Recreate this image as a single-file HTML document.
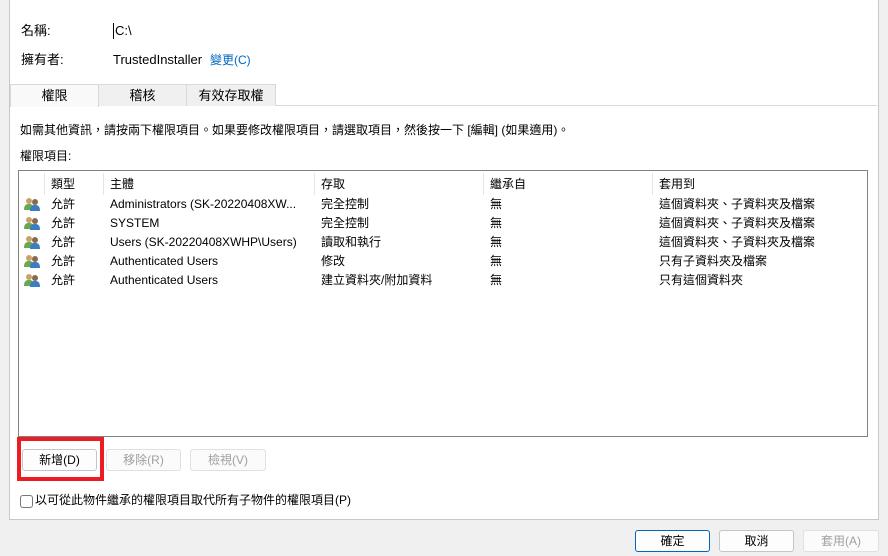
<!DOCTYPE html><html><head><meta charset="utf-8"><style>
body{margin:0;width:888px;height:556px;background:#f0f0f0;font-family:"Liberation Sans","Noto Sans CJK TC",sans-serif;font-size:12px;color:#000;position:relative;overflow:hidden}
.a{position:absolute;white-space:nowrap;line-height:16px;height:16px}
.panel{position:absolute;left:9px;top:0;width:868px;height:519px;background:#fff;border:1px solid #c8c8c8;border-top:none}
.tab{position:absolute;top:84px;height:21px;background:#f0f0f0;border:1px solid #d9d9d9;border-bottom:none;text-align:center;line-height:21px;font-size:13px}
.list{position:absolute;left:18px;top:170px;width:848px;height:265px;border:1px solid #828282;background:#fff}
.btn{position:absolute;height:20px;border:1px solid #c5c5c5;border-radius:3px;background:#fdfdfd;text-align:center;line-height:20px;font-size:12px}
.dis{color:#a0a0a0;border-color:#e0e0e0;background:#fbfbfb}
.sep{position:absolute;top:2px;width:1px;height:22px;background:#e5e5e5}
</style></head><body>
<div class="panel"></div>
<div class="a" style="left:21px;top:23px;font-size:13px">名稱:</div>
<div class="a" style="left:113px;top:23px;font-size:13px;border-left:1px solid #000;padding-left:1px">C:\</div>
<div class="a" style="left:21px;top:52px;font-size:13px">擁有者:</div>
<div class="a" style="left:113px;top:52px;font-size:13px">TrustedInstaller</div>
<div class="a" style="left:210px;top:52px;font-size:12px;color:#0067c0">變更(C)</div>
<div style="position:absolute;left:10px;top:105px;width:867px;height:1px;background:#d9d9d9"></div>
<div class="tab" style="left:10px;width:87px;background:#f9f9f9;height:22px">權限</div>
<div class="tab" style="left:98px;width:87px">稽核</div>
<div class="tab" style="left:186px;width:88px">有效存取權</div>
<div class="a" style="left:20px;top:122px">如需其他資訊，請按兩下權限項目。如果要修改權限項目，請選取項目，然後按一下 [編輯] (如果適用)。</div>
<div class="a" style="left:20px;top:148px">權限項目:</div>
<div class="list">
<div class="sep" style="left:25px"></div><div class="sep" style="left:84px"></div><div class="sep" style="left:295px"></div><div class="sep" style="left:464px"></div><div class="sep" style="left:633px"></div>
<div class="a" style="left:32px;top:5px">類型</div><div class="a" style="left:91px;top:5px">主體</div><div class="a" style="left:302px;top:5px">存取</div><div class="a" style="left:471px;top:5px">繼承自</div><div class="a" style="left:640px;top:5px">套用到</div>
</div>
<div id="rows"></div>
<script>
var r=[["Administrators (SK-20220408XW...","完全控制","這個資料夾、子資料夾及檔案"],["SYSTEM","完全控制","這個資料夾、子資料夾及檔案"],["Users (SK-20220408XWHP\\Users)","讀取和執行","這個資料夾、子資料夾及檔案"],["Authenticated Users","修改","只有子資料夾及檔案"],["Authenticated Users","建立資料夾/附加資料","只有這個資料夾"]];
var h="";r.forEach(function(x,i){var y=196+i*19;
h+='<svg class="a" style="left:24px;top:'+(y+1)+'px" width="17" height="14"><circle cx="5" cy="4" r="3" fill="#c9a26b"/><path d="M0 13c0-5 2-6 5-6s5 1 5 6z" fill="#6aa84f"/><circle cx="11" cy="5" r="3" fill="#8a6a4a"/><path d="M6 14c0-5 2-6 5-6s5 1 5 6z" fill="#3a7dc0"/></svg>';
h+='<div class="a" style="left:51px;top:'+y+'px">允許</div><div class="a" style="left:110px;top:'+y+'px">'+x[0]+'</div><div class="a" style="left:321px;top:'+y+'px">'+x[1]+'</div><div class="a" style="left:490px;top:'+y+'px">無</div><div class="a" style="left:659px;top:'+y+'px">'+x[2]+'</div>';});
document.getElementById("rows").innerHTML=h;
</script>
<div style="position:absolute;left:17px;top:437px;width:87px;height:44px;border:4px solid #ec1c24;box-sizing:border-box"></div>
<div class="btn" style="left:22px;top:449px;width:73px">新增(D)</div>
<div class="btn dis" style="left:106px;top:449px;width:73px">移除(R)</div>
<div class="btn dis" style="left:190px;top:449px;width:74px">檢視(V)</div>
<div style="position:absolute;left:20px;top:495px;width:11px;height:11px;border:1px solid #777;border-radius:3px;background:#fff"></div>
<div class="a" style="left:35px;top:492px">以可從此物件繼承的權限項目取代所有子物件的權限項目(P)</div>
<div class="btn" style="left:635px;top:530px;width:73px;border-color:#0067c0">確定</div>
<div class="btn" style="left:719px;top:530px;width:73px">取消</div>
<div class="btn dis" style="left:803px;top:530px;width:74px">套用(A)</div>
</body></html>
